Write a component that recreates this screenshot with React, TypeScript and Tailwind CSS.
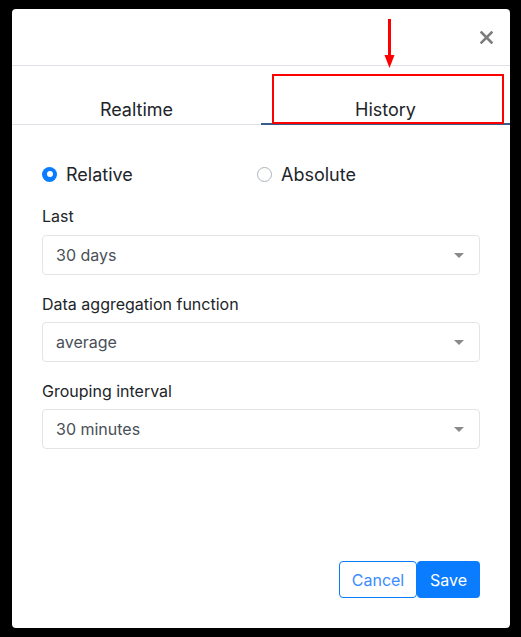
import { useState } from 'react';

const font = { fontFamily: 'Inter, "Noto Sans", sans-serif' };

function Caret() {
  return (
    <svg width="10" height="5" viewBox="0 0 10 5" className="shrink-0">
      <path d="M0 0 L10 0 L5 5 Z" fill="#8a8a8a" />
    </svg>
  );
}

function SelectBox({ value }: { value: string }) {
  return (
    <div className="h-[40px] rounded-[4px] border border-[#e4e4e4] bg-white flex items-center justify-between pl-[13px] pr-[15px]">
      <span className="text-[16px] text-[#495057]">{value}</span>
      <Caret />
    </div>
  );
}

function Radio({ label, checked, onClick }: { label: string; checked: boolean; onClick: () => void }) {
  return (
    <button onClick={onClick} className="flex items-center gap-[9px] text-left">
      {checked ? (
        <span className="w-[15px] h-[15px] rounded-full bg-[#0a7cff] flex items-center justify-center">
          <span className="w-[6px] h-[6px] rounded-full bg-white" />
        </span>
      ) : (
        <span className="w-[15px] h-[15px] rounded-full border border-[#adb5bd] bg-white" />
      )}
      <span className="text-[18px] text-[#212529]">{label}</span>
    </button>
  );
}

export default function App() {
  const [tab, setTab] = useState<'realtime' | 'history'>('history');
  const [mode, setMode] = useState<'relative' | 'absolute'>('relative');

  return (
    <div className="relative w-[521px] h-[637px] bg-black pt-[9px] pl-[12px]" style={font}>
      <div className="w-[498px] h-[619px] bg-white rounded-[4px] flex flex-col overflow-hidden">
        {/* Header */}
        <div className="h-[57px] border-b border-[#dee2e6] flex items-center justify-end pr-[17px] shrink-0">
          <button className="w-[14px] h-[14px] flex items-center justify-center" aria-label="Close">
            <svg width="13" height="13" viewBox="0 0 13 13">
              <path d="M1.5 1.5 L11.5 11.5 M11.5 1.5 L1.5 11.5" stroke="#7d7d7d" strokeWidth="2.6" strokeLinecap="square" />
            </svg>
          </button>
        </div>

        {/* Tabs */}
        <div className="flex h-[59px] border-b border-[#dee2e6] shrink-0">
          {[
            { id: 'realtime' as const, label: 'Realtime' },
            { id: 'history' as const, label: 'History' },
          ].map(t => (
            <button
              key={t.id}
              onClick={() => setTab(t.id)}
              className={
                'flex-1 flex items-end justify-center pb-0 text-[18px] leading-[26px] text-[#212529] -mb-px border-b-2 ' +
                (tab === t.id ? 'border-[#3a5a87]' : 'border-transparent')
              }
            >
              {t.label}
            </button>
          ))}
        </div>

        {/* Body */}
        <div className="flex-1 flex flex-col px-[30px] pt-[37px] pb-[30px]">
          <div className="flex items-center h-[24px]">
            <div className="w-[215px]">
              <Radio label="Relative" checked={mode === 'relative'} onClick={() => setMode('relative')} />
            </div>
            <Radio label="Absolute" checked={mode === 'absolute'} onClick={() => setMode('absolute')} />
          </div>

          <div className="mt-[19px] h-[22px] flex items-center text-[16px] text-[#212529]">Last</div>
          <div className="mt-[8px]">
            <SelectBox value="30 days" />
          </div>

          <div className="mt-[18px] h-[22px] flex items-center text-[16px] text-[#212529]">Data aggregation function</div>
          <div className="mt-[7px]">
            <SelectBox value="average" />
          </div>

          <div className="mt-[18px] h-[22px] flex items-center text-[16px] text-[#212529]">Grouping interval</div>
          <div className="mt-[7px]">
            <SelectBox value="30 minutes" />
          </div>

          <div className="mt-auto flex justify-end">
            <button className="w-[78px] h-[37px] rounded-[4px] border border-[#0a7cff] text-[#3b8cff] text-[16px] bg-white">
              Cancel
            </button>
            <button className="w-[63px] h-[37px] rounded-[4px] bg-[#0a7cff] text-white text-[16px]">
              Save
            </button>
          </div>
        </div>
      </div>

      {/* Annotation overlay */}
      <div className="absolute left-[272px] top-[74px] w-[232px] h-[50px] border-2 border-[#ff0000] pointer-events-none" />
      <svg className="absolute left-[384px] top-[19px] pointer-events-none" width="11" height="50" viewBox="0 0 11 50">
        <rect x="4" y="0" width="3" height="38" fill="#ff0000" />
        <path d="M0.5 36 L10.5 36 L5.5 49 Z" fill="#ff0000" />
      </svg>
    </div>
  );
}
